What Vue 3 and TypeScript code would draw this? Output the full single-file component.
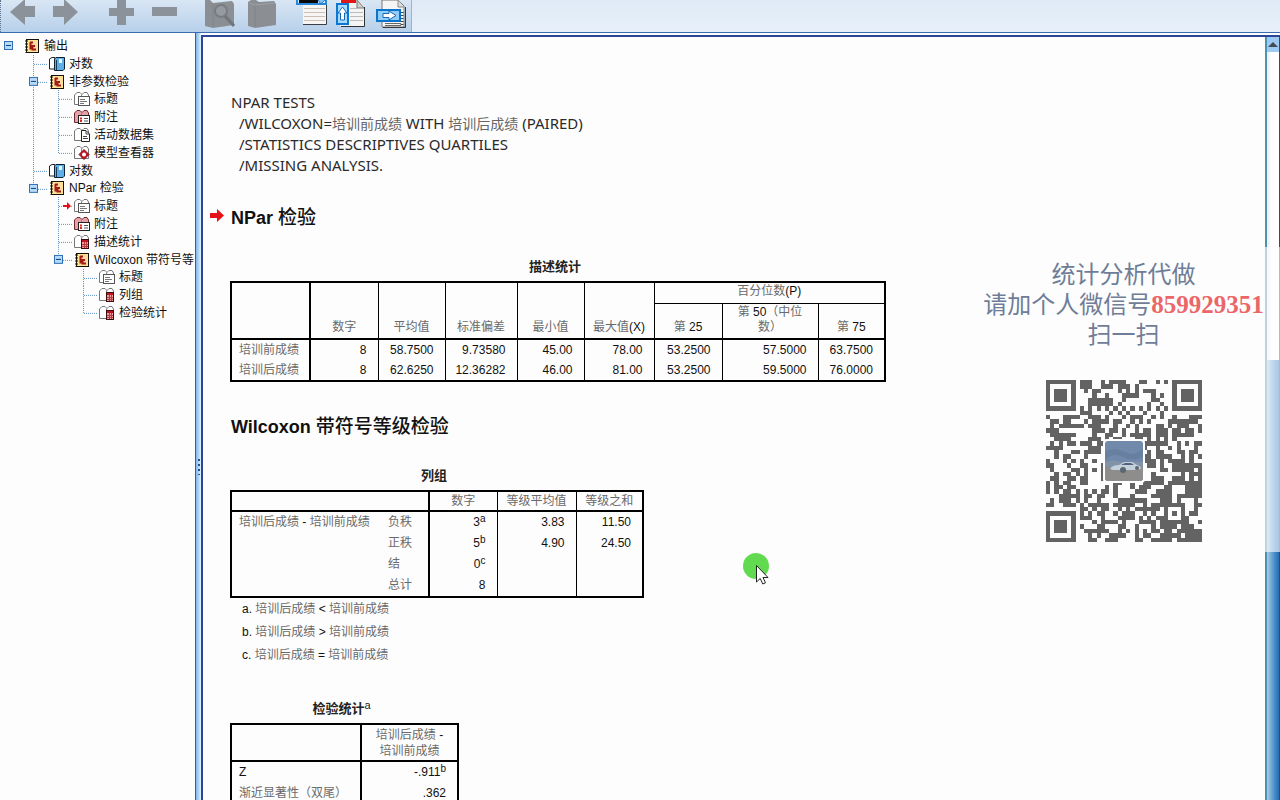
<script setup lang="ts">
import { ref } from 'vue'

type IconKind = 'output' | 'log' | 'title' | 'note' | 'dataset' | 'model' | 'table'

interface TreeNode {
  label: string
  icon: IconKind
  /* One letter per indent level: T = tee, L = last child, I = pass-through, B = blank */
  guides: string
  toggle?: boolean
  current?: boolean
}

const nodes: TreeNode[] = [
  { label: '输出', icon: 'output', guides: '', toggle: true },
  { label: '对数', icon: 'log', guides: 'T' },
  { label: '非参数检验', icon: 'output', guides: 'T', toggle: true },
  { label: '标题', icon: 'title', guides: 'IT' },
  { label: '附注', icon: 'note', guides: 'IT' },
  { label: '活动数据集', icon: 'dataset', guides: 'IT' },
  { label: '模型查看器', icon: 'model', guides: 'IL' },
  { label: '对数', icon: 'log', guides: 'T' },
  { label: 'NPar 检验', icon: 'output', guides: 'L', toggle: true },
  { label: '标题', icon: 'title', guides: 'BT', current: true },
  { label: '附注', icon: 'note', guides: 'BT' },
  { label: '描述统计', icon: 'table', guides: 'BT' },
  { label: 'Wilcoxon 带符号等', icon: 'output', guides: 'BL', toggle: true },
  { label: '标题', icon: 'title', guides: 'BBT' },
  { label: '列组', icon: 'table', guides: 'BBT' },
  { label: '检验统计', icon: 'table', guides: 'BBL' },
]

const descriptives = [
  { name: '培训前成绩', values: ['8', '58.7500', '9.73580', '45.00', '78.00', '53.2500', '57.5000', '63.7500'] },
  { name: '培训后成绩', values: ['8', '62.6250', '12.36282', '46.00', '81.00', '53.2500', '59.5000', '76.0000'] },
]

const ranks = [
  { name: '负秩', n: '3', mark: 'a', mean: '3.83', sum: '11.50' },
  { name: '正秩', n: '5', mark: 'b', mean: '4.90', sum: '24.50' },
  { name: '结', n: '0', mark: 'c', mean: '', sum: '' },
  { name: '总计', n: '8', mark: '', mean: '', sum: '' },
]

const footnotes = [
  { mark: 'a.', sign: '<' },
  { mark: 'b.', sign: '>' },
  { mark: 'c.', sign: '=' },
]

const SIZE = 37

function finder(x: number, y: number): boolean | null {
  for (const [fx, fy] of [[0, 0], [SIZE - 7, 0], [0, SIZE - 7]]) {
    const dx = x - fx
    const dy = y - fy
    if (dx >= -1 && dx <= 7 && dy >= -1 && dy <= 7) {
      const ring = Math.max(Math.abs(dx - 3), Math.abs(dy - 3))
      return ring === 3 || ring <= 1
    }
  }
  return null
}

function buildCode(): string {
  let seed = 9137
  let d = ''
  for (let y = 0; y < SIZE; y++) {
    for (let x = 0; x < SIZE; x++) {
      seed = (seed * 1103515245 + 12345) % 2147483648
      let on = (seed >> 12) % 100 < 52
      const f = finder(x, y)
      const ring = Math.max(Math.abs(x - 30), Math.abs(y - 30))
      if (f !== null) on = f
      else if (ring <= 2) on = ring !== 1
      else if (x === 6 || y === 6) on = (x + y) % 2 === 0
      if (on) d += `M${x} ${y}h1v1h-1z`
    }
  }
  return d
}

const codePath = ref(buildCode())
</script>

<template>
  <div class="app">
    <header class="toolbar">
      <div class="tools">
        <div class="group nav">
          <button type="button" aria-label="后退">
            <svg width="26" height="32"><path d="M0 12L15 -1V6H25V17H15V25Z" fill="#8b9299" /></svg>
          </button>
          <button type="button" aria-label="前进">
            <svg width="26" height="32"><path d="M25 12L11 -1V6H0V17H11V25Z" fill="#8b9299" /></svg>
          </button>
        </div>
        <div class="group nav">
          <button type="button" aria-label="展开">
            <svg width="26" height="32"><path d="M8 0H17V8H25V16H17V25H8V16H0V8H8Z" fill="#8b9299" /></svg>
          </button>
          <button type="button" aria-label="折叠">
            <svg width="26" height="32"><path d="M0 7H25V16H0Z" fill="#8b9299" /></svg>
          </button>
        </div>
        <div class="group books">
          <button type="button" aria-label="查看">
            <svg width="30" height="32">
              <path d="M0 0H5L8 3L27 1L29 4V25L8 28L0 26Z" fill="#8b8f94" />
              <path d="M8 4V27" stroke="#7f848a" stroke-width="1" />
              <circle cx="16" cy="11" r="6" fill="#969a9f" stroke="#777c82" stroke-width="2" />
              <path d="M20 16L29 26" stroke="#70757b" stroke-width="3" />
            </svg>
          </button>
          <button type="button" aria-label="关闭">
            <svg width="30" height="32">
              <path d="M1 2L4 0H9L12 2L27 1L29 4V25L8 28L1 26Z" fill="#8b8f94" />
              <path d="M8 4V27" stroke="#7f848a" stroke-width="1" />
              <path d="M2 3L8 5L28 3" stroke="#9da1a6" fill="none" />
            </svg>
          </button>
        </div>
        <div class="group inserts">
          <button type="button" aria-label="插入标题">
            <svg width="32" height="32">
              <rect x="7" y="1" width="23" height="24" fill="#f7f6f5" />
              <path d="M7 24.500H30.500V3" stroke="#3b4048" fill="none" />
              <path d="M8 8.500H29M8 12.500H29M8 16.500H29M8 20.500H29" stroke="#cbbfb8" />
              <path d="M1 -2H30V4H1Z" fill="#d8edff" stroke="#2a87d8" stroke-width="2" />
              <path d="M3 -1H22V3H3Z" fill="#090909" />
              <path d="M22 0L25 4L29 0" fill="#83c0f2" stroke="#2478c6" />
            </svg>
          </button>
          <button type="button" aria-label="插入文本">
            <svg width="32" height="32">
              <path d="M4 0H22L28 6V26H4Z" fill="#f4f4f4" />
              <path d="M5 26.500H28.500V7" stroke="#303338" fill="none" />
              <path d="M5 0H20V3H5Z" fill="#e01818" />
              <path d="M21 0V8H28Z" fill="#d2d2d2" stroke="#777" />
              <path d="M14 8.500H26M14 12.500H27M14 16.500H27M14 20.500H27" stroke="#bbb" />
              <rect x="1" y="4" width="11" height="20" fill="#a9daff" stroke="#0878d4" stroke-width="2" />
              <path d="M6.500 7L11 13H8.500V20H4.500V13H2Z" fill="#fff" stroke="#1768b1" />
            </svg>
          </button>
          <button type="button" aria-label="插入对象">
            <svg width="34" height="32">
              <path d="M6 0H22L28 6V27H6Z" fill="#f5f5f5" stroke="#777" />
              <path d="M7 27.500H29.500V7" stroke="#34373b" fill="none" />
              <path d="M22 0V7H28" fill="#ddd" stroke="#888" />
              <path d="M9 23.500H25M9 25.500H25" stroke="#666" />
              <path d="M26 12V25" stroke="#444" stroke-dasharray="1 2" stroke-width="3" />
              <rect x="1" y="10" width="23" height="11" fill="#91cdfa" stroke="#0b74cd" stroke-width="2" />
              <path d="M7 13.500H13V11L20 15.500L13 20V17.500H7Z" fill="#fff" stroke="#1768b1" />
            </svg>
          </button>
        </div>
      </div>
    </header>

    <div class="body">
      <nav class="outline" aria-label="大纲">
        <ul class="tree">
          <li v-for="(node, i) in nodes" :key="i" class="node">
            <span class="lead">
              <button v-if="node.guides === ''" type="button" class="toggle" aria-label="折叠">
                <svg width="9" height="9"><rect x=".5" y=".5" width="8" height="8" fill="#b5dafa" stroke="#2f6fb5" /><path d="M2 4.500H7" stroke="#123c78" /></svg>
              </button>
            </span>
            <svg
              v-for="(g, k) in node.guides.split('')"
              :key="k"
              class="guide"
              width="25"
              viewBox="0 0 25 18"
              preserveAspectRatio="none"
            >
              <g stroke="#5d93c4" stroke-dasharray="1 1" fill="none">
                <path v-if="g === 'T' || g === 'I'" d="M12.500 0V18" />
                <path v-if="g === 'L'" d="M12.500 0V9" />
                <path v-if="g === 'T' || g === 'L'" d="M13 9.500H27" />
              </g>
              <g v-if="node.toggle && k === node.guides.length - 1">
                <rect x="8.500" y="4.500" width="8" height="8" fill="#b5dafa" stroke="#2f6fb5" />
                <path d="M10 8.500H15" stroke="#123c78" />
              </g>
              <path
                v-if="node.current && k === node.guides.length - 1"
                d="M17 8H21V5L25 9L21 13V10H17Z"
                fill="#e0101c"
              />
            </svg>
            <svg class="icon" width="16" height="16" viewBox="0 0 16 16">
              <template v-if="node.icon === 'output'">
                <rect x="2.500" y="1.500" width="12" height="13" fill="#ffe58f" stroke="#15120a" />
                <path d="M2.500 2V15" stroke="#15120a" stroke-width="2" stroke-dasharray="2 1" />
                <rect x="5" y="3" width="8" height="10" fill="#ffd9a0" />
                <path d="M6.500 4V11.500M6 4.500H9M7 8H11M8.500 8V11.500H12" stroke="#a01c14" stroke-width="2" fill="none" />
              </template>
              <template v-else-if="node.icon === 'log'">
                <path d="M.5 13V3L3 1.500H6V13Z" fill="#fff" stroke="#222" />
                <path d="M5.500 3L7 1.500H15.500V13L14 14.500H5.500Z" fill="#5fb0e6" stroke="#0d2233" />
                <path d="M7.500 4V14" stroke="#163c5c" />
                <rect x="10" y="3" width="3" height="4" fill="#e8f6ff" />
              </template>
              <template v-else>
                <path
                  d="M.5 13.500V4L3 1.500H6L8 3.500L10 1.500H13L14.500 4V13.500Z"
                  :fill="node.icon === 'note' ? '#e3a2a8' : '#fff'"
                  :stroke="node.icon === 'note' ? '#712630' : '#777'"
                />
                <path d="M7.500 3.500V13" stroke="#888" />
                <g v-if="node.icon === 'title'">
                  <rect x="4.500" y="5.500" width="11" height="9" fill="#fff" stroke="#555" />
                  <path d="M6 8.500H11M6 10.500H13M6 12.500H10" stroke="#777" />
                </g>
                <g v-else-if="node.icon === 'note'">
                  <rect x="4.500" y="6.500" width="11" height="8" fill="#fff" stroke="#222" />
                  <path d="M6 9.500H8M6 12H8" stroke="#d22" stroke-width="2" />
                  <path d="M10 9.500H14M10 12H14" stroke="#555" />
                </g>
                <g v-else-if="node.icon === 'dataset'">
                  <path d="M7.500 3.500H12L15.500 7V14.500H7.500Z" fill="#fff" stroke="#222" />
                  <path d="M12 4V7H15M9 9.500H13M9 11.500H14" stroke="#444" fill="none" />
                </g>
                <g v-else-if="node.icon === 'model'">
                  <path d="M10 4.500L15 9.500L10 14.500L5 9.500Z" fill="#c21626" stroke="#861019" />
                  <circle cx="10" cy="9.500" r="2" fill="#fff" />
                </g>
                <g v-else>
                  <rect x="7.500" y="5.500" width="7" height="9" fill="#e8a0a2" stroke="#3b0c10" />
                  <rect x="8" y="6" width="6" height="2" fill="#c01424" />
                  <path d="M10.500 8V14M12.500 8V14M8 10.500H14M8 12.500H14" stroke="#b93a42" />
                </g>
              </template>
            </svg>
            <span class="label">{{ node.label }}</span>
          </li>
        </ul>
      </nav>

      <div class="splitter">
        <svg width="4" height="17"><path d="M2 1V17" stroke="#1f4f94" stroke-width="2" stroke-dasharray="2 3" /></svg>
      </div>

      <main class="viewer">
        <article class="doc">
          <pre class="syntax">NPAR TESTS
<span class="opt">/WILCOXON=<i>培训前成绩</i> WITH <i>培训后成绩</i> (PAIRED)</span>
<span class="opt">/STATISTICS DESCRIPTIVES QUARTILES</span>
<span class="opt">/MISSING ANALYSIS.</span></pre>

          <div class="heading">
            <svg class="pointer" width="14" height="14"><path d="M0 4H7V0L14 6.500L7 13V9H0Z" fill="#e5121a" /></svg>
            <h2>NPar <span>检验</span></h2>
          </div>

          <table class="pivot descriptives">
            <caption>描述统计</caption>
            <colgroup>
              <col class="w79" /><col class="w68" /><col class="w67" /><col class="w72" /><col class="w67" />
              <col class="w70" /><col class="w68" /><col class="w96" /><col class="w67" />
            </colgroup>
            <thead>
              <tr class="upper">
                <th rowspan="2" class="stub"></th>
                <th rowspan="2">数字</th>
                <th rowspan="2">平均值</th>
                <th rowspan="2">标准偏差</th>
                <th rowspan="2">最小值</th>
                <th rowspan="2">最大值<b>(X)</b></th>
                <th colspan="3" class="span">百分位数<b>(P)</b></th>
              </tr>
              <tr class="lower">
                <th>第 <b>25</b></th>
                <th>第 <b>50</b>（中位<br />数）</th>
                <th>第 <b>75</b></th>
              </tr>
            </thead>
            <tbody>
              <tr v-for="row in descriptives" :key="row.name">
                <th class="stub" scope="row">{{ row.name }}</th>
                <td v-for="(v, i) in row.values" :key="i">{{ v }}</td>
              </tr>
            </tbody>
          </table>

          <div class="heading second">
            <h2>Wilcoxon <span>带符号等级检验</span></h2>
          </div>

          <table class="pivot ranks">
            <caption>列组</caption>
            <colgroup>
              <col class="w150" /><col class="w48" /><col class="w68" /><col class="w79" /><col class="w67" />
            </colgroup>
            <thead>
              <tr>
                <th colspan="2" class="stub"></th>
                <th>数字</th>
                <th>等级平均值</th>
                <th>等级之和</th>
              </tr>
            </thead>
            <tbody>
              <tr v-for="(row, i) in ranks" :key="row.name">
                <th v-if="i === 0" rowspan="4" class="pair" scope="rowgroup">培训后成绩 <b>-</b> 培训前成绩</th>
                <th class="stub" scope="row">{{ row.name }}</th>
                <td>{{ row.n }}<sup v-if="row.mark">{{ row.mark }}</sup></td>
                <td>{{ row.mean }}</td>
                <td>{{ row.sum }}</td>
              </tr>
            </tbody>
          </table>
          <ul class="notes">
            <li v-for="f in footnotes" :key="f.mark"><b>{{ f.mark }}</b> 培训后成绩 <b>{{ f.sign }}</b> 培训前成绩</li>
          </ul>

          <table class="pivot tests">
            <caption>检验统计<sup>a</sup></caption>
            <colgroup><col class="w130" /><col class="w97" /></colgroup>
            <thead>
              <tr>
                <th class="stub"></th>
                <th>培训后成绩 <b>-</b><br />培训前成绩</th>
              </tr>
            </thead>
            <tbody>
              <tr>
                <th class="stub" scope="row"><b>Z</b></th>
                <td>-.911<sup>b</sup></td>
              </tr>
              <tr>
                <th class="stub" scope="row">渐近显著性（双尾）</th>
                <td>.362</td>
              </tr>
            </tbody>
          </table>
        </article>

        <div class="scrollbar">
          <button type="button" class="up" aria-label="向上滚动">
            <svg width="10" height="6"><path d="M0 5L5 0L10 5Z" fill="#454b55" /></svg>
          </button>
          <div class="track"></div>
          <div class="thumb"></div>
        </div>
      </main>
    </div>

    <aside class="promo">
      <p>统计分析代做</p>
      <p>请加个人微信号<strong>859929351</strong></p>
      <p>扫一扫</p>
      <div class="code">
        <svg width="156" height="162" viewBox="0 0 37 37" preserveAspectRatio="none" shape-rendering="crispEdges">
          <path :d="codePath" fill="#636363" />
        </svg>
        <svg class="photo" width="42" height="44" viewBox="0 0 42 44">
          <rect width="42" height="44" rx="4" fill="#fff" />
          <rect x="2" y="2" width="38" height="40" rx="3" fill="#7189ab" />
          <path d="M2 12Q14 8 22 13T40 10V18Q30 23 20 18T2 21Z" fill="#67809f" />
          <path d="M2 27H40V39Q40 42 37 42H5Q2 42 2 39Z" fill="#8f8d8b" />
          <path d="M2 23Q10 20 18 23H40V28H2Z" fill="#8293a8" />
          <path d="M7 30Q9 26 16 26L21 23H29L34 26Q38 27 38 30L31 31H10Z" fill="#c4d0dc" />
          <path d="M18 26L22 24H28L31 26Z" fill="#52647b" />
          <circle cx="20" cy="31" r="3" fill="#5a6673" />
          <circle cx="34" cy="29" r="2" fill="#5a6673" />
        </svg>
      </div>
    </aside>

    <svg class="cursor" width="30" height="36" viewBox="0 0 30 36">
      <circle cx="14" cy="14" r="13" fill="#62da50" />
      <path d="M14.500 13.500V30L18.200 26.500L20.800 32L23.500 30.800L21 25.500H26Z" fill="#fff" stroke="#222" />
    </svg>
  </div>
</template>

<style>
html,
body {
  margin: 0;
  background: #fdfdfd;
}
</style>

<style scoped>
.app {
  position: relative;
  display: flex;
  flex-direction: column;
  height: 100vh;
  overflow: hidden;
  font-family: 'Liberation Sans', 'Noto Sans CJK SC', sans-serif;
  font-size: 12px;
  color: #111;
}
button {
  display: block;
  padding: 0;
  border: 0;
  background: none;
}
svg {
  display: block;
}
.toolbar {
  flex: none;
  height: 32px;
  background: linear-gradient(#dfeaf6, #e7f0fa);
  border-bottom: 1px solid #3d6cae;
  overflow: hidden;
}
.tools {
  display: flex;
  width: max-content;
  height: 32px;
  padding: 0 1px 0 9px;
  background: linear-gradient(#d9e6f4, #b7d0ea);
  border-left: 1px dotted #5f7690;
  border-right: 1px solid #9ab4d0;
}
.group {
  display: flex;
}
.nav {
  gap: 17px;
  margin-right: 30px;
}
.nav + .nav {
  margin-right: 27px;
}
.books {
  gap: 12px;
  margin-right: 19px;
}
.inserts {
  gap: 8px;
}
.body {
  flex: 1;
  min-height: 0;
  display: flex;
}
.outline {
  flex: none;
  width: 195px;
  overflow: hidden;
  background: #fdfdfd;
}
.tree {
  display: grid;
  grid-auto-rows: 1fr;
  height: 285px;
  margin: 4px 0 0;
  padding: 0;
  list-style: none;
}
.node {
  display: flex;
  align-items: center;
  min-height: 0;
  white-space: nowrap;
}
.lead {
  flex: none;
  width: 17px;
  padding-left: 4px;
}
.guide {
  flex: none;
  height: 100%;
  overflow: visible;
}
.icon {
  flex: none;
  margin: 0 4px 0 3px;
}
.label {
  line-height: 16px;
}
.splitter {
  flex: none;
  display: flex;
  align-items: center;
  justify-content: center;
  width: 5px;
  padding-top: 100px;
  border-left: 1px solid #2f62a6;
  background: linear-gradient(90deg, #7fb6ea, #b8dbf8 60%, #e6f3fd);
}
.viewer {
  flex: 1;
  min-width: 0;
  display: flex;
  margin-top: 2px;
  border-top: 2px solid #2c4596;
  border-left: 2px solid #2c4596;
  background: #fdfdfd;
}
.doc {
  flex: 1;
  min-width: 0;
  padding: 55px 0 0 27px;
  overflow: hidden;
}
.syntax {
  margin: 0 0 30px 1px;
  font-family: 'Noto Sans', 'Noto Sans CJK SC', sans-serif;
  font-size: 15px;
  line-height: 21px;
  color: #2a2a2a;
}
.syntax i {
  font-size: 14px;
  font-style: normal;
  color: #666;
}
.opt {
  padding-left: 8px;
}
.heading {
  display: flex;
  align-items: center;
  gap: 7px;
  margin: 0 0 28px -20px;
}
.heading.second {
  margin: 33px 0 28px 1px;
}
.pointer {
  margin-bottom: 4px;
}
h2 {
  margin: 0;
  font-size: 18px;
  line-height: 24px;
}
h2 span {
  font-size: 19px;
  font-weight: 500;
}
.pivot {
  table-layout: fixed;
  border-collapse: collapse;
  border: 2px solid #000;
  line-height: 15px;
}
.pivot caption {
  padding: 0 6px 5px 0;
  font-size: 13px;
  font-weight: 700;
  line-height: 18px;
  color: #222;
}
.pivot caption sup {
  font-size: 11px;
  font-weight: 400;
}
.pivot th {
  padding: 0 2px;
  font-weight: 400;
  color: #6a6a6a;
  border: 1px solid #000;
}
.pivot b,
.notes b {
  font-weight: 400;
  color: #111;
}
.pivot thead th {
  vertical-align: bottom;
  border-bottom: 2px solid #000;
}
.pivot thead .stub,
.pivot tbody .stub {
  border-right: 2px solid #000;
}
.pivot tbody th {
  text-align: left;
  padding-left: 7px;
  border-width: 0;
  white-space: nowrap;
}
.pivot tbody td {
  height: 21px;
  padding: 0 11px 0 0;
  text-align: right;
  border: solid #000;
  border-width: 0 1px;
}
.descriptives {
  width: 654px;
}
.pivot.descriptives tbody td {
  height: 20px;
}
.descriptives .upper {
  height: 21px;
}
.descriptives .lower {
  height: 36px;
}
.descriptives thead .span {
  vertical-align: middle;
  border-bottom-width: 1px;
}
.descriptives thead th {
  padding-bottom: 3px;
}
.ranks {
  width: 412px;
}
.ranks thead tr {
  height: 20px;
}
.ranks thead th {
  vertical-align: middle;
}
.ranks .pair {
  padding-top: 3px;
  vertical-align: top;
}
sup {
  font-size: 10px;
  line-height: 0;
  vertical-align: 4px;
}
.tests {
  width: 227px;
}
.tests thead tr {
  height: 37px;
}
.tests thead th {
  vertical-align: middle;
  line-height: 16px;
}
.w48 { width: 48px; }
.w67 { width: 67px; }
.w68 { width: 68px; }
.w70 { width: 70px; }
.w72 { width: 72px; }
.w79 { width: 79px; }
.w96 { width: 96px; }
.w97 { width: 97px; }
.w130 { width: 130px; }
.w150 { width: 150px; }
.notes {
  margin: 0 0 33px 12px;
  padding: 0;
  list-style: none;
  line-height: 23px;
  color: #6a6a6a;
}
.scrollbar {
  flex: none;
  display: flex;
  flex-direction: column;
  width: 12px;
  border-left: 2px solid #4c93ad;
  border-right: 1px solid #1d4f8c;
}
.up {
  display: flex;
  align-items: center;
  justify-content: center;
  height: 15px;
  background: #9dcaf4;
}
.track {
  flex: 308;
  background: linear-gradient(90deg, #ececf2, #fff 40%);
}
.thumb {
  flex: 440;
  background: linear-gradient(90deg, #a9cbe8, #3f87c8 70%, #266db2);
}
.promo {
  position: absolute;
  top: 247px;
  right: 0;
  width: 313px;
  height: 305px;
  background: rgba(253, 253, 253, 0.62);
  font-family: 'Liberation Sans', 'Noto Sans CJK SC', sans-serif;
  font-size: 24px;
  line-height: 30px;
  text-align: center;
  white-space: nowrap;
  color: #6f7d98;
}
.promo p {
  margin: 0;
}
.promo p:first-child {
  padding-top: 13px;
}
.promo strong {
  font-family: 'Liberation Serif', serif;
  font-size: 25px;
  line-height: 24px;
  color: #ea6668;
}
.code {
  display: grid;
  place-items: center;
  margin-top: 30px;
}
.code > svg {
  grid-area: 1 / 1;
}
.cursor {
  position: absolute;
  top: 552px;
  left: 742px;
}
</style>
